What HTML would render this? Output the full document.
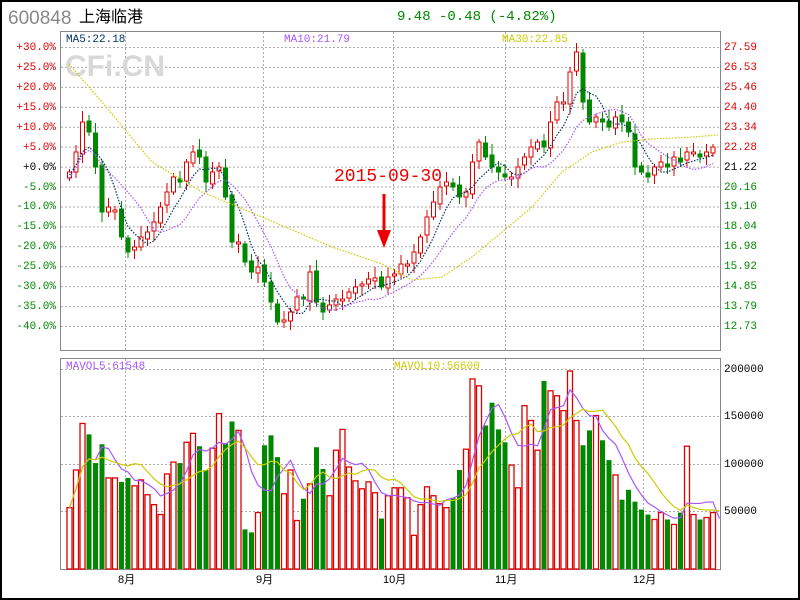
<!DOCTYPE html>
<html><head><meta charset="utf-8">
<style>
html,body{margin:0;padding:0;background:#fff;}
#w{position:relative;width:796px;height:596px;border:2px solid #000;overflow:hidden;font-family:"Liberation Mono","Noto Sans CJK SC",monospace;}
.t{position:absolute;font-size:11px;line-height:12px;white-space:nowrap;}
</style></head><body><div id="w">
<div class="t" style="left:6px;top:7px;font-size:19px;line-height:20px;color:#888;font-family:'Liberation Sans',sans-serif;">600848</div>
<div class="t" style="left:77px;top:6px;font-size:16px;line-height:20px;color:#000;font-family:'Liberation Sans','Noto Sans CJK SC',sans-serif;">上海临港</div>
<div class="t" style="left:395px;top:7px;font-size:14px;line-height:16px;color:#080;">9.48 -0.48 (-4.82%)</div>
<svg id="s" width="796" height="596" style="position:absolute;left:0;top:0" xmlns="http://www.w3.org/2000/svg">
<g stroke="#aaa" stroke-dasharray="2,2" stroke-width="1" id="grid"></g>
<rect x="58.5" y="29.5" width="660" height="319" fill="none" stroke="#888"/>
<rect x="58.5" y="356.5" width="660" height="211" fill="none" stroke="#888"/>
<text x="63" y="74" font-family="Liberation Sans,sans-serif" font-weight="bold" font-size="30" fill="#d8d8d8">CFi.CN</text>
<g id="cs"></g>
<text x="332" y="179" font-family="Liberation Mono,monospace" font-size="18" fill="#e00">2015-09-30</text>
<line x1="382" y1="192" x2="382" y2="236" stroke="#e00" stroke-width="3"/>
<polygon points="375,228 389,228 382,246" fill="#e00"/>
</svg>
<div class="t" style="left:64px;top:32px;color:#036;">MA5:22.18</div>
<div class="t" style="left:282px;top:32px;color:#a5f;">MA10:21.79</div>
<div class="t" style="left:500px;top:32px;color:#cc0;">MA30:22.85</div>
<div class="t" style="left:64px;top:359px;color:#a5f;">MAVOL5:61548</div>
<div class="t" style="left:392px;top:359px;color:#cc0;">MAVOL10:56600</div>
<div id="lab"></div>
<div class="t" style="left:116px;top:572px;font-family:'Liberation Sans','Noto Sans CJK SC',sans-serif;">8月</div>
<div class="t" style="left:254px;top:572px;font-family:'Liberation Sans','Noto Sans CJK SC',sans-serif;">9月</div>
<div class="t" style="left:381px;top:572px;font-family:'Liberation Sans','Noto Sans CJK SC',sans-serif;">10月</div>
<div class="t" style="left:493px;top:572px;font-family:'Liberation Sans','Noto Sans CJK SC',sans-serif;">11月</div>
<div class="t" style="left:631px;top:572px;font-family:'Liberation Sans','Noto Sans CJK SC',sans-serif;">12月</div>
</div>
<script>
(function(){
var NS="http://www.w3.org/2000/svg";
function el(p,n,a){var e=document.createElementNS(NS,n);for(var k in a)e.setAttribute(k,a[k]);p.appendChild(e);return e;}
var g=document.getElementById('grid'),i,y;
for(i=0;i<15;i++){y=45.5+i*19.93;el(g,'line',{x1:59,x2:718,y1:y,y2:y});}
[414.5,462.5,509.5,367.5].forEach(function(yy){el(g,'line',{x1:59,x2:718,y1:yy,y2:yy});});
[123.5,261.5,391.5,503.5,641.5].forEach(function(x){el(g,'line',{x1:x,x2:x,y1:30,y2:348});el(g,'line',{x1:x,x2:x,y1:357,y2:567});});
var L=document.getElementById('lab'),h='';
var lp=['+30.0%','+25.0%','+20.0%','+15.0%','+10.0%','+5.0%','+0.0%','-5.0%','-10.0%','-15.0%','-20.0%','-25.0%','-30.0%','-35.0%','-40.0%'];
var rp=['27.59','26.53','25.46','24.40','23.34','22.28','21.22','20.16','19.10','18.04','16.98','15.92','14.85','13.79','12.73'];
for(i=0;i<15;i++){y=40+i*19.93;var c=i<6?'#d00':(i==6?'#000':'#080');
h+='<div class="t" style="right:742px;top:'+y+'px;color:'+c+';text-align:right">'+lp[i]+'</div>';
h+='<div class="t" style="left:722px;top:'+y+'px;color:'+c+'">'+rp[i]+'</div>';}
[['200000',362],['150000',409],['100000',457],['50000',504]].forEach(function(a){h+='<div class="t" style="left:722px;top:'+a[1]+'px;color:#000">'+a[0]+'</div>';});
L.innerHTML=h;
var ys=[170,150,120,130,165,210,205,208,235,250,245,235,230,220,205,190,175,180,160,150,155,180,170,165,195,240,240,260,270,265,280,300,320,318,310,295,297,270,300,310,303,297,297,290,285,282,277,276,285,275,272,262,262,250,235,215,200,185,180,185,195,190,160,140,155,165,170,175,175,165,155,145,140,145,120,100,100,70,50,100,120,115,120,125,115,120,130,165,170,175,165,160,165,155,160,150,150,155,150,145];
var vols=[62000,100000,147000,136000,107000,126000,92000,92000,88000,92000,84000,90000,75000,65000,55000,96000,108000,107000,128000,137000,124000,100000,122000,157000,127000,149000,140000,40000,37000,57000,125000,135000,113000,76000,100000,49000,71000,86000,123000,101000,74000,120000,141000,103000,89000,81000,88000,77000,51000,74000,82000,82000,72000,34000,65000,83000,74000,66000,62000,72000,100000,121000,192000,185000,145000,168000,141000,128000,105000,82000,165000,150000,120000,190000,180000,175000,160000,200000,150000,125000,140000,155000,130000,110000,95000,70000,80000,68000,60000,55000,50000,57000,50000,45000,57000,124000,55000,50000,52000,57000,40000];
var cs=document.getElementById('cs'),n=ys.length,sp=6.5,x0=65;
var vy=function(v){return 567-v*0.00099;};
for(i=0;i<n;i++){var x=x0+i*sp,cl=ys[i],op=i?ys[i-1]+((i*7)%5-2):cl+6;if(Math.abs(op-cl)<2)op=cl+2;var up=cl<op;
var tp=Math.min(op,cl),bt=Math.max(op,cl);var hi=tp-3-(i*13)%9,lo=bt+3+(i*11)%8;
var col=up?'#d00':'#080';
el(cs,'line',{x1:x+2.5,x2:x+2.5,y1:hi,y2:lo,stroke:col,'stroke-width':1});
el(cs,'rect',{x:x+0.5,y:tp,width:4,height:bt-tp,fill:up?'#fff':col,stroke:col,'stroke-width':1});
var v=vols[i]||60000;var vt=vy(v);
el(cs,'rect',{x:x,y:vt,width:5,height:567-vt,fill:up?'#fff':col,stroke:col,'stroke-width':up?1.3:0});}
function ma(a,k,f,col,dash){var p='';for(var i=0;i<a.length;i++){var s=0,m=0;for(var j=Math.max(0,i-k+1);j<=i;j++){s+=a[j];m++;}p+=(x0+2.5+i*sp)+','+f(s/m)+' ';}
var o={points:p,fill:'none',stroke:col,'stroke-width':1.2};if(dash)o['stroke-dasharray']='1.5,1.5';el(cs,'polyline',o);}
ma(ys,5,function(v){return v+3;},'#036',1);
ma(ys,10,function(v){return v+6;},'#a5f',1);
el(cs,'polyline',{points:'67,62 100,100 150,160 200,190 260,215 330,245 380,262 410,278 440,275 470,255 500,230 530,205 560,170 590,150 620,140 650,137 690,135 716,133',fill:'none',stroke:'#cc0','stroke-width':1.2,'stroke-dasharray':'1.5,1.5'});
ma(vols,5,vy,'#a5f',0);ma(vols,10,vy,'#cc0',0);
})();
</script>
</body></html>
